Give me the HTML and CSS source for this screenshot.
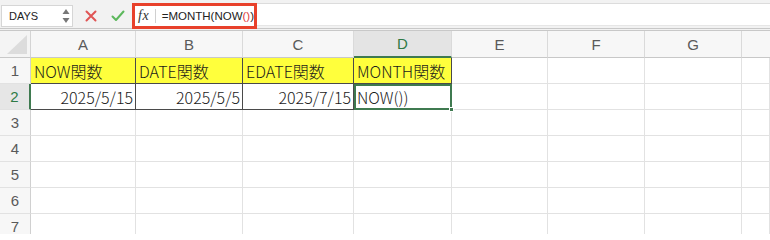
FILE: index.html
```html
<!DOCTYPE html>
<html lang="ja">
<head>
<meta charset="utf-8">
<title>MONTH関数</title>
<link rel="stylesheet" href="styles.css">
</head>
<body>
<div class="toolbar">
  <div class="namebox">
    <span class="name">DAYS</span>
    <span class="spinner">
      <svg width="8" height="16" viewBox="0 0 8 16"><path d="M4 1 L7.5 6 L0.5 6 Z" fill="#777"/><path d="M4 15 L7.5 10 L0.5 10 Z" fill="#777"/></svg>
    </span>
  </div>
  <div class="actions">
    <svg class="cancel" width="12" height="12" viewBox="0 0 12 12"><path d="M1.5 1.5 L10.5 10.5 M10.5 1.5 L1.5 10.5" stroke="#e05555" stroke-width="2" stroke-linecap="round"/></svg>
    <svg class="enter" width="14" height="12" viewBox="0 0 14 12"><path d="M1.5 6.5 L5 10 L12.5 1.5" stroke="#5cb85c" stroke-width="2" fill="none" stroke-linecap="round" stroke-linejoin="round"/></svg>
  </div>
  <div class="formula">
    <div class="highlight">
      <span class="fx">fx</span>
      <span class="sep"></span>
      <span class="ftext">=MONTH(NOW<span class="paren">()</span>)</span>
    </div>
    <div class="rest"></div>
  </div>
</div>
<div class="sheet">
  <div class="corner"><span class="tri"></span></div>
  <div class="colh">A</div>
  <div class="colh">B</div>
  <div class="colh">C</div>
  <div class="colh active">D</div>
  <div class="colh">E</div>
  <div class="colh">F</div>
  <div class="colh">G</div>
  <div class="colh last"></div>

  <div class="rowh">1</div>
  <div class="cell hdr">NOW関数</div>
  <div class="cell hdr">DATE関数</div>
  <div class="cell hdr">EDATE関数</div>
  <div class="cell hdr">MONTH関数</div>
  <div class="cell"></div>
  <div class="cell"></div>
  <div class="cell"></div>
  <div class="cell"></div>

  <div class="rowh active">2</div>
  <div class="cell data num">2025/5/15</div>
  <div class="cell data num">2025/5/5</div>
  <div class="cell data num">2025/7/15</div>
  <div class="cell data selected">NOW())<span class="handle"></span></div>
  <div class="cell"></div>
  <div class="cell"></div>
  <div class="cell"></div>
  <div class="cell"></div>

  <div class="rowh">3</div>
  <div class="cell"></div><div class="cell"></div><div class="cell"></div><div class="cell"></div><div class="cell"></div><div class="cell"></div><div class="cell"></div><div class="cell"></div>
  <div class="rowh">4</div>
  <div class="cell"></div><div class="cell"></div><div class="cell"></div><div class="cell"></div><div class="cell"></div><div class="cell"></div><div class="cell"></div><div class="cell"></div>
  <div class="rowh">5</div>
  <div class="cell"></div><div class="cell"></div><div class="cell"></div><div class="cell"></div><div class="cell"></div><div class="cell"></div><div class="cell"></div><div class="cell"></div>
  <div class="rowh">6</div>
  <div class="cell"></div><div class="cell"></div><div class="cell"></div><div class="cell"></div><div class="cell"></div><div class="cell"></div><div class="cell"></div><div class="cell"></div>
  <div class="rowh">7</div>
  <div class="cell"></div><div class="cell"></div><div class="cell"></div><div class="cell"></div><div class="cell"></div><div class="cell"></div><div class="cell"></div><div class="cell"></div>
</div>
</body>
</html>
```

FILE: styles.css
```css
* { box-sizing: border-box; }
html, body { margin: 0; padding: 0; background: #ffffff; overflow: hidden; }
body {
  width: 770px;
  height: 234px;
  font-family: "Noto Sans CJK JP", "Noto Sans", sans-serif;
  color: #222;
}

/* toolbar */
.toolbar {
  height: 31px;
  display: flex;
  align-items: center;
  background: #f2f2f2;
  border-bottom: 3px double #c8c8c8;
}
.namebox {
  margin-left: 1px;
  width: 72px;
  height: 22px;
  background: #fff;
  border: 1px solid #d6d6d6;
  display: flex;
  align-items: center;
  justify-content: space-between;
  padding: 0 2px 0 7px;
  margin-top: 3px;
}
.name {
  font-family: "Liberation Sans", Arial, sans-serif;
  font-size: 11px;
  color: #222;
}
.spinner { display: flex; align-items: center; }
.spinner svg { display: block; }
.actions {
  display: flex;
  align-items: center;
  gap: 14px;
  margin-left: 12px;
  width: 46px;
  margin-top: 3px;
}
.actions svg { display: block; }
.formula {
  flex: 1;
  display: flex;
  align-items: center;
  height: 26px;
  margin-left: 1px;
  margin-top: 3px;
}
.highlight {
  width: 125px;
  height: 26px;
  border: 3px solid #e8412b;
  background: #fff;
  display: flex;
  align-items: center;
  padding-left: 3px;
}
.fx {
  font-family: "Liberation Serif", "Times New Roman", serif;
  font-style: italic;
  font-size: 14px;
  color: #333;
  width: 15px;
  letter-spacing: 0.5px;
}
.sep {
  width: 1px;
  height: 14px;
  background: #d0d0d0;
  margin: 0 6px 0 4px;
}
.ftext {
  font-family: "Liberation Sans", Arial, sans-serif;
  font-size: 11.5px;
  color: #222;
  white-space: nowrap;
}
.paren { color: #e03a3a; }
.rest {
  flex: 1;
  height: 23px;
  margin-top: -3px;
  background: #fff;
  border-top: 1px solid #dcdcdc;
  border-bottom: 1px solid #e6e6e6;
}

/* sheet */
.sheet {
  display: grid;
  grid-template-columns: 31px 105px 107px 111px 98px 96px 97px 97px 1fr;
  grid-template-rows: 27px repeat(7, 26px);
}
.corner {
  background: #f4f4f4;
  border-right: 1px solid #d4d4d4;
  border-bottom: 1px solid #c8c8c8;
  position: relative;
}
.tri {
  position: absolute;
  right: 3px;
  bottom: 3px;
  width: 20px;
  height: 19px;
  background: #dcdcdc;
  clip-path: polygon(100% 0, 100% 100%, 0 100%);
}
.colh {
  background: #f7f7f7;
  border-right: 1px solid #dadada;
  border-bottom: 1px solid #c8c8c8;
  display: flex;
  align-items: center;
  justify-content: center;
  font-family: "Liberation Sans", Arial, sans-serif;
  font-size: 15px;
  color: #5a5a5a;
}
.colh.active {
  background: #e4e4e4;
  color: #2f7a45;
  border-bottom: 2px solid #3f7a50;
}
.colh.last { border-right: none; }
.rowh {
  background: #f7f7f7;
  border-right: 1px solid #d0d0d0;
  border-bottom: 1px solid #e2e2e2;
  display: flex;
  align-items: center;
  justify-content: center;
  font-family: "Liberation Sans", Arial, sans-serif;
  font-size: 15px;
  color: #5a5a5a;
}
.rowh.active {
  background: #e6e6e6;
  color: #2f7a45;
  border-right: 2px solid #3f7a50;
}
.cell {
  border-right: 1px solid #e2e2e2;
  border-bottom: 1px solid #e2e2e2;
  font-size: 16px;
  font-weight: 300;
  display: flex;
  align-items: center;
  padding: 0 2px 0 3px;
  white-space: nowrap;
  color: #1a1a1a;
}
.cell.hdr {
  background: #ffff3c;
  border-right: 1px solid #4a4a4a;
  border-bottom: 1px solid #4a4a4a;
}
.cell.data {
  border-right: 1px solid #4a4a4a;
  border-bottom: 1px solid #4a4a4a;
}
.cell.num { justify-content: flex-end; }
.cell.selected {
  position: relative;
  border: none;
  outline: 2px solid #3f7a50;
  outline-offset: -2px;
  border-bottom: 1px solid #4a4a4a;
}
.handle {
  position: absolute;
  right: -2px;
  bottom: -3px;
  width: 5px;
  height: 5px;
  background: #3f7a50;
  border: 1px solid #fff;
}
```
